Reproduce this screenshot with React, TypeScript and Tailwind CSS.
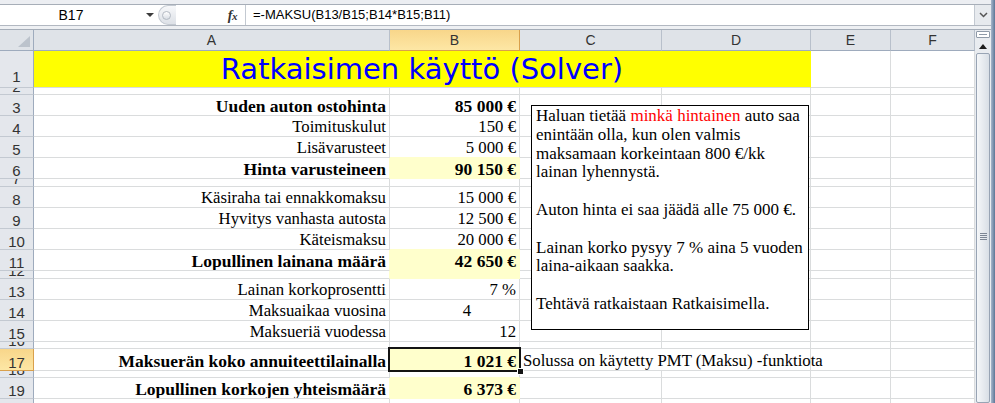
import React from 'react';

type Row = {
  n: string;
  h: string;
  a?: string;
  b?: string;
  bold?: boolean;
  yellow?: boolean;
  sel?: boolean;
  c?: string;
  bPad?: string;
};

const rows: Row[] = [
  { n: '2', h: 'h-[7px]' },
  { n: '3', h: 'h-[21px]', a: 'Uuden auton ostohinta', b: '85 000 €', bold: true },
  { n: '4', h: 'h-[21px]', a: 'Toimituskulut', b: '150 €' },
  { n: '5', h: 'h-[21px]', a: 'Lisävarusteet', b: '5 000 €' },
  { n: '6', h: 'h-[21px]', a: 'Hinta varusteineen', b: '90 150 €', bold: true, yellow: true },
  { n: '7', h: 'h-[8px]' },
  { n: '8', h: 'h-[21px]', a: 'Käsiraha tai ennakkomaksu', b: '15 000 €' },
  { n: '9', h: 'h-[21px]', a: 'Hyvitys vanhasta autosta', b: '12 500 €' },
  { n: '10', h: 'h-[21px]', a: 'Käteismaksu', b: '20 000 €' },
  { n: '11', h: 'h-[21px]', a: 'Lopullinen lainana määrä', b: '42 650 €', bold: true, yellow: true },
  { n: '12', h: 'h-[8px]', yellow: true },
  { n: '13', h: 'h-[21px]', a: 'Lainan korkoprosentti', b: '7 %' },
  { n: '14', h: 'h-[21px]', a: 'Maksuaikaa vuosina', b: '4', bPad: 'pr-[48px]' },
  { n: '15', h: 'h-[21px]', a: 'Maksueriä vuodessa', b: '12' },
  { n: '16', h: 'h-[7px]' },
  {
    n: '17',
    h: 'h-[22px]',
    a: 'Maksuerän koko annuiteettilainalla',
    b: '1 021 €',
    bold: true,
    yellow: true,
    sel: true,
    c: 'Solussa on käytetty PMT (Maksu) -funktiota',
  },
  { n: '18', h: 'h-[7px]' },
  { n: '19', h: 'h-[21px]', a: 'Lopullinen korkojen yhteismäärä', b: '6 373 €', bold: true, yellow: true },
  { n: '20', h: 'h-[21px]' },
];

const GRID = 'grid grid-cols-[34px_356px_130px_142px_149px_80px_84px]';
const SERIF = "font-['Liberation_Serif','Times_New_Roman',serif]";

function Toolbar() {
  return (
    <div className="h-[29px] flex flex-col bg-[#eceef2]">
      <div className="h-[5px] bg-[#eceef2] border-b border-[#a7aeb8]" />
      <div className="h-[20px] bg-white flex">
        <div className="w-[158px] flex">
          <div className="flex-1 flex items-center justify-center text-[14px] text-black">B17</div>
          <div className="w-[16px] flex items-center justify-center">
            <div className="w-0 h-0 border-l-[4px] border-r-[4px] border-t-[4px] border-l-transparent border-r-transparent border-t-[#3c3c3c]" />
          </div>
        </div>
        <div className="w-[18px] h-full rounded-l-full border border-r-0 border-[#c4cad2] bg-gradient-to-b from-[#f7f8fa] to-[#dde1e7] flex items-center pl-[3px]">
          <div className="w-[9px] h-[9px] rounded-full border border-[#b3bac3] bg-gradient-to-b from-[#ffffff] to-[#d9dee5]" />
        </div>
        <div className="w-[69px] flex items-center justify-end pr-[8px]">
          <span className="font-['Liberation_Serif',serif] italic font-bold text-[14px] text-[#333] tracking-[-0.5px]">
            f<span className="text-[11px]">x</span>
          </span>
        </div>
        <div className="w-[1px] h-full bg-[#c3c9d1]" />
        <div className="flex-1 flex items-center pl-[7px] text-[13px] text-black whitespace-nowrap">
          =-MAKSU(B13/B15;B14*B15;B11)
        </div>
        <div className="w-[17px] h-full bg-[#e7eaee] border-l border-[#c3c9d1] flex items-center justify-center">
          <svg width="9" height="6" viewBox="0 0 9 6">
            <path d="M1 1 L4.5 4.5 L8 1" stroke="#555" strokeWidth="1.5" fill="none" />
          </svg>
        </div>
      </div>
      <div className="h-[1px] bg-[#b2b8c1]" />
      <div className="flex-1 bg-[#eef0f3]" />
    </div>
  );
}

function HeaderRow() {
  const cols = [
    { l: 'A', sel: false },
    { l: 'B', sel: true },
    { l: 'C', sel: false },
    { l: 'D', sel: false },
    { l: 'E', sel: false },
    { l: 'F', sel: false },
  ];
  return (
    <div className={`${GRID} border-t border-[#a5adb8]`}>
      <div className="h-[21px] relative bg-[#dfe3e8] border-r border-b border-r-[#9eabbd] border-b-[#9eabbd]">
        <svg className="absolute right-[3px] bottom-[3px]" width="12" height="11" viewBox="0 0 12 11">
          <polygon points="12,0 12,11 0,11" fill="#bcc3cc" />
        </svg>
      </div>
      {cols.map((c) => (
        <div
          key={c.l}
          className={
            c.sel
              ? 'h-[21px] flex items-center justify-center text-[14px] text-[#333] bg-gradient-to-b from-[#f8d68a] to-[#fde7a5] border-r border-b border-r-[#d9a04c] border-b-[#d9a04c]'
              : 'h-[21px] flex items-center justify-center text-[14px] text-[#333] bg-[#dfe3e8] border-r border-b border-r-[#b8c0cb] border-b-[#9eabbd]'
          }
        >
          {c.l}
        </div>
      ))}
    </div>
  );
}

function TitleRow() {
  return (
    <div className={GRID}>
      <div className="h-[37px] flex items-end justify-center pb-[3px] bg-[#e4e7ec] border-r border-b border-r-[#9eabbd] border-b-[#c3c9d1] text-[15px] leading-[15px] text-[#333]">
        1
      </div>
      <div className="col-span-4 h-[37px] bg-[#ffff00] border-r border-b border-r-[#ffff00] border-b-[#dadcdd] flex items-end justify-center pb-[3px] overflow-hidden">
        <span className="font-['DejaVu_Sans',sans-serif] text-[29px] leading-[29px] text-[#0000ff] whitespace-nowrap">
          Ratkaisimen käyttö (Solver)
        </span>
      </div>
      <div className="h-[37px] border-r border-b border-r-[#dadcdd] border-b-[#dadcdd]" />
      <div className="h-[37px] border-r border-b border-r-[#dadcdd] border-b-[#dadcdd]" />
    </div>
  );
}

function SheetRow({ r, nextYellow }: { r: Row; nextYellow: boolean }) {
  const textCls = r.bold
    ? `${SERIF} font-bold text-[17.5px] leading-[18px] text-black whitespace-nowrap`
    : `${SERIF} text-[16.75px] leading-[18px] text-black whitespace-nowrap`;
  const hdr = r.sel
    ? `${r.h} flex items-end justify-center overflow-hidden bg-gradient-to-b from-[#f8d68a] to-[#fde7a5] border-r border-b border-r-[#d9a04c] border-b-[#d9a04c] text-[15px] leading-[15px] text-[#333]`
    : `${r.h} flex items-end justify-center overflow-hidden bg-[#e4e7ec] border-r border-b border-r-[#9eabbd] border-b-[#c3c9d1] text-[15px] leading-[15px] text-[#333]`;
  const aCls = `${r.h} flex items-end justify-end pr-[3px] overflow-hidden border-r border-b border-b-[#dadcdd] ${
    r.yellow ? 'border-r-[#ffffcc]' : 'border-r-[#dadcdd]'
  }`;
  const bCls = `${r.h} relative flex items-end justify-end ${r.bPad ?? 'pr-[3px]'} border-r border-b ${
    r.yellow ? 'bg-[#ffffcc] border-r-[#ffffcc] border-b-[#ffffcc]' : 'border-r-[#dadcdd]'
  } ${!r.yellow ? (nextYellow ? 'border-b-[#ffffcc]' : 'border-b-[#dadcdd]') : ''}`;
  const plain = `${r.h} border-r border-b border-r-[#dadcdd] border-b-[#dadcdd]`;
  return (
    <div className={GRID}>
      <div className={hdr}>{r.n}</div>
      <div className={aCls}>{r.a && <span className={textCls}>{r.a}</span>}</div>
      <div className={bCls}>
        {r.b && <span className={textCls}>{r.b}</span>}
        {r.sel && (
          <>
            <div className="absolute -left-[2px] -top-[2px] -right-[2px] -bottom-[2px] border-2 border-[#141414] z-10" />
            <div className="absolute -right-[5px] -bottom-[5px] w-[7px] h-[7px] bg-[#141414] border border-white z-20" />
          </>
        )}
      </div>
      {r.c ? (
        <div className={`col-span-2 ${r.h} flex items-end pl-[3px] border-r border-b border-r-[#dadcdd] border-b-[#dadcdd]`}>
          <span className={`${SERIF} text-[16.75px] leading-[18px] text-black whitespace-nowrap`}>{r.c}</span>
        </div>
      ) : (
        <>
          <div className={plain} />
          <div className={plain} />
        </>
      )}
      <div className={plain} />
      <div className={plain} />
    </div>
  );
}

function Sheet() {
  return (
    <div className="w-[975px] flex flex-col overflow-hidden">
      <HeaderRow />
      <TitleRow />
      {rows.map((r, i) => (
        <SheetRow key={r.n} r={r} nextYellow={!!rows[i + 1]?.yellow} />
      ))}
    </div>
  );
}

function Scrollbar() {
  return (
    <div className="w-[16px] flex flex-col bg-[#e9ecf0] border-t border-[#a5adb8]">
      <div className="h-[10px] flex items-start justify-center pt-[1px]">
        <div className="w-[14px] h-[7px] rounded-[1px] border border-[#8f9aa8] bg-white flex items-center justify-center">
          <div className="w-[8px] h-[1px] bg-[#8f9aa8]" />
        </div>
      </div>
      <div className="h-[13px] flex items-center justify-center">
        <div className="w-0 h-0 border-l-[4px] border-r-[4px] border-b-[5px] border-l-transparent border-r-transparent border-b-[#1e1e1e]" />
      </div>
      <div className="flex-1 mx-[1px] rounded-[2px] border border-[#98a4b4] bg-gradient-to-r from-[#f5f7f9] to-[#d9dfe6] flex flex-col items-center pt-[179px] gap-[1px]">
        <div className="w-[7px] h-[1px] bg-[#7c8694]" />
        <div className="w-[7px] h-[1px] bg-[#7c8694]" />
        <div className="w-[7px] h-[1px] bg-[#7c8694]" />
        <div className="w-[7px] h-[1px] bg-[#7c8694]" />
      </div>
    </div>
  );
}

function TextBox() {
  const line = `${SERIF} text-[17px] leading-[18.8px] h-[18.8px] whitespace-nowrap text-black`;
  return (
    <div className="absolute left-[531px] top-[105px] w-[278px] h-[225px] border border-black bg-white pl-[4px] pt-[1px] z-10">
      <div className={line}>
        Haluan tietää <span className="text-[#ff0000]">minkä hintainen</span> auto saa
      </div>
      <div className={line}>enintään olla, kun olen valmis</div>
      <div className={line}>maksamaan korkeintaan 800 €/kk</div>
      <div className={line}>lainan lyhennystä.</div>
      <div className={line} />
      <div className={line}>Auton hinta ei saa jäädä alle 75 000 €.</div>
      <div className={line} />
      <div className={line}>Lainan korko pysyy 7 % aina 5 vuoden</div>
      <div className={line}>laina-aikaan saakka.</div>
      <div className={line} />
      <div className={line}>Tehtävä ratkaistaan Ratkaisimella.</div>
    </div>
  );
}

export default function App() {
  return (
    <div className="relative w-[995px] h-[403px] overflow-hidden bg-white flex font-['Liberation_Sans',Arial,sans-serif]">
      <div className="w-[991px] h-full flex flex-col">
        <Toolbar />
        <div className="flex flex-1 min-h-0">
          <Sheet />
          <Scrollbar />
        </div>
      </div>
      <div className="w-[4px] h-full bg-gradient-to-r from-[#a9b8cc] to-[#5d7696]" />
      <TextBox />
    </div>
  );
}
